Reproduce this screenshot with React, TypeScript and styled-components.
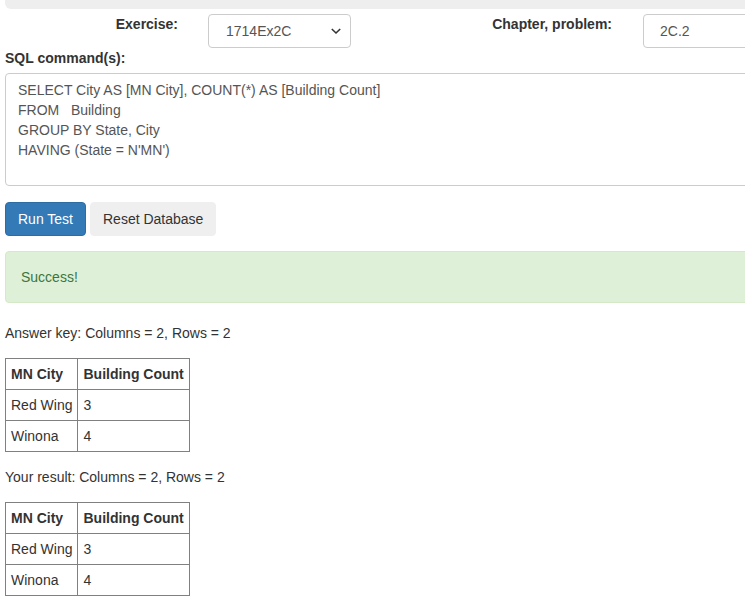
import React from "react";
import styled, { createGlobalStyle } from "styled-components";

const Global = createGlobalStyle`
  html, body { margin: 0; padding: 0; overflow: hidden; background: #fff; }
  body {
    font-family: "Liberation Sans", Arial, Helvetica, sans-serif;
    font-size: 14px;
    line-height: 20px;
    color: #333;
  }
  * { box-sizing: border-box; }
`;

const Page = styled.div`
  width: 900px;
  padding-left: 5px;
`;

const HeaderBar = styled.div`
  height: 9px;
  background: #eee;
  border-radius: 0 0 6px 6px;
  overflow: hidden;
  padding-left: 58px;
`;

const Title = styled.h1`
  margin: -31px 0 0;
  font-size: 24px;
  line-height: 30px;
  font-weight: 700;
  color: #333;
  white-space: nowrap;
`;

const FormRow = styled.div`
  display: flex;
  align-items: flex-start;
  margin-top: 5px;
`;

const FieldLabel = styled.label<{ $w: number }>`
  width: ${(p) => p.$w}px;
  text-align: right;
  font-weight: 700;
  line-height: 20px;
  flex: none;
`;

const SelectBox = styled.div`
  margin-left: 30px;
  width: 143px;
  height: 34px;
  border: 1px solid #ccc;
  border-radius: 4px;
  background: #fff;
  display: flex;
  align-items: center;
  justify-content: space-between;
  padding: 0 8px 0 17px;
  color: #555;
  flex: none;
`;

const TextInput = styled.div`
  margin-left: 31px;
  width: 220px;
  height: 34px;
  border: 1px solid #ccc;
  border-radius: 4px;
  display: flex;
  align-items: center;
  padding: 0 16px;
  color: #555;
  flex: none;
`;

const BlockLabel = styled.label`
  display: block;
  font-weight: 700;
  margin: 0 0 5px;
`;

const SqlArea = styled.div`
  height: 113px;
  border: 1px solid #ccc;
  border-radius: 4px;
  padding: 6px 12px;
  color: #555;
  white-space: pre;
`;

const ButtonRow = styled.div`
  display: flex;
  gap: 4px;
  margin-top: 16px;
`;

const Button = styled.button<{ $primary?: boolean }>`
  font-family: inherit;
  font-size: 14px;
  line-height: 20px;
  height: 34px;
  padding: 6px 12px;
  border-radius: 4px;
  border: 1px solid ${(p) => (p.$primary ? "#2e6da4" : "#efefef")};
  background: ${(p) => (p.$primary ? "#337ab7" : "#efefef")};
  color: ${(p) => (p.$primary ? "#fff" : "#333")};
`;

const Alert = styled.div`
  margin-top: 15px;
  margin-bottom: 20px;
  padding: 15px 15px;
  border: 1px solid #d6e9c6;
  border-radius: 4px;
  background: #dff0d8;
  color: #3c763d;
`;

const Caption = styled.p`
  margin: 0 0 15px;
`;

const ResultTable = styled.table`
  border-collapse: collapse;
  margin-bottom: 15px;
  th, td {
    border: 1px solid #808080;
    padding: 5px 5px;
    text-align: left;
    line-height: 20px;
  }
  th { font-weight: 700; }
`;

const Chevron = () => (
  <svg width="12" height="8" viewBox="0 0 12 8" aria-hidden>
    <path d="M1.8 2 L6 6 L10.2 2" fill="none" stroke="#333" strokeWidth="1.6" />
  </svg>
);

const rows: [string, string][] = [
  ["Red Wing", "3"],
  ["Winona", "4"],
];

const DataTable = () => (
  <ResultTable>
    <thead>
      <tr>
        <th>MN City</th>
        <th>Building Count</th>
      </tr>
    </thead>
    <tbody>
      {rows.map(([c, n]) => (
        <tr key={c}>
          <td>{c}</td>
          <td>{n}</td>
        </tr>
      ))}
    </tbody>
  </ResultTable>
);

export default function App() {
  return (
    <>
      <Global />
      <Page>
        <HeaderBar>
          <Title>SQL Query Test Application</Title>
        </HeaderBar>
        <FormRow>
          <FieldLabel $w={173}>Exercise:</FieldLabel>
          <SelectBox>
            <span>1714Ex2C</span>
            <Chevron />
          </SelectBox>
          <FieldLabel $w={261}>Chapter, problem:</FieldLabel>
          <TextInput>2C.2</TextInput>
        </FormRow>
        <BlockLabel>SQL command(s):</BlockLabel>
        <SqlArea>{`SELECT City AS [MN City], COUNT(*) AS [Building Count]
FROM   Building
GROUP BY State, City
HAVING (State = N'MN')`}</SqlArea>
        <ButtonRow>
          <Button $primary>Run Test</Button>
          <Button>Reset Database</Button>
        </ButtonRow>
        <Alert>Success!</Alert>
        <Caption>Answer key: Columns = 2, Rows = 2</Caption>
        <DataTable />
        <Caption>Your result: Columns = 2, Rows = 2</Caption>
        <DataTable />
      </Page>
    </>
  );
}
